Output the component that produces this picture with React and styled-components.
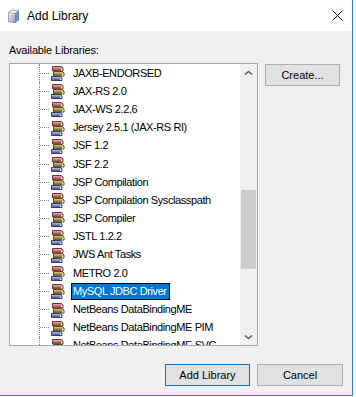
import styled, { createGlobalStyle } from 'styled-components'

const libraries = [
  'JAXB-ENDORSED',
  'JAX-RS 2.0',
  'JAX-WS 2.2.6',
  'Jersey 2.5.1 (JAX-RS RI)',
  'JSF 1.2',
  'JSF 2.2',
  'JSP Compilation',
  'JSP Compilation Sysclasspath',
  'JSP Compiler',
  'JSTL 1.2.2',
  'JWS Ant Tasks',
  'METRO 2.0',
  'MySQL JDBC Driver',
  'NetBeans DataBindingME',
  'NetBeans DataBindingME PIM',
  'NetBeans DataBindingME SVG',
]

const Global = createGlobalStyle`
  body {
    margin: 0;
    background: #ffffff;
    font-family: "Liberation Sans", Arial, sans-serif;
  }
`

const BooksIcon = () => (
  <svg width="16" height="16" viewBox="0 0 16 16">
    {/* top book */}
    <path d="M2.5 1.5h9l1.5 1.5v3h-10.5z" fill="#a85c5c" stroke="#6e3434" />
    <rect x="3" y="2" width="9" height="1.5" fill="#dca0a0" />
    <rect x="11" y="3.5" width="1.5" height="2" fill="#f2e4e4" />
    {/* middle book */}
    <path d="M3.5 6.5h9l1.5 1.5v3h-10.5z" fill="#8a7836" stroke="#5a4c1e" />
    <rect x="4" y="7" width="9" height="1.5" fill="#cdb873" />
    <rect x="12" y="8.5" width="1.5" height="2" fill="#f4efd8" />
    {/* bottom book */}
    <path d="M1.5 11.5h9l1.5 1.5v2.5h-10.5z" fill="#5c689e" stroke="#343c68" />
    <rect x="2" y="12" width="9" height="1.5" fill="#a2acd6" />
    <rect x="10" y="13.5" width="1.5" height="1.5" fill="#e8ecf8" />
  </svg>
)

const WindowIcon = () => (
  <svg width="16" height="16" viewBox="0 0 16 16">
    <defs>
      <linearGradient id="front" x1="0" y1="0" x2="1" y2="1">
        <stop offset="0" stopColor="#e8eef6" />
        <stop offset="1" stopColor="#8fa3c0" />
      </linearGradient>
    </defs>
    <path d="M3 4.5 L7 1.5 L14 2.5 L14 12 L10 15 L3 14 Z" fill="#5d6f8c" />
    <path d="M3.5 4.5 L7.2 2 L13.5 2.8 L10 5.2 Z" fill="#dfe6f0" />
    <path d="M3.5 4.8 L10 5.5 L10 14.5 L3.5 13.7 Z" fill="url(#front)" />
    <path d="M10.3 5.4 L13.6 3 L13.6 11.8 L10.3 14.4 Z" fill="#7d90ae" />
  </svg>
)

const Chevron = ({ down }) => (
  <svg width="9" height="6" viewBox="0 0 9 6">
    <path
      d={down ? 'M1 1.5 L4.5 4.5 L8 1.5' : 'M1 4.5 L4.5 1.5 L8 4.5'}
      fill="none"
      stroke="#606060"
      strokeWidth="1.6"
    />
  </svg>
)

const App = () => {
  return (
    <Window>
      <Global />
      <TitleBar>
        <WindowIcon />
        <Title>Add Library</Title>
        <CloseButton>
          <svg width="11" height="11" viewBox="0 0 11 11">
            <path d="M0.5 0.5 L10.5 10.5 M10.5 0.5 L0.5 10.5" stroke="#111" strokeWidth="1" />
          </svg>
        </CloseButton>
      </TitleBar>
      <Client>
        <Caption>Available Libraries:</Caption>
        <Main>
          <TreePanel>
            <TreeList>
              {libraries.map((name) => (
                <Row key={name}>
                  <Connector />
                  <BooksIcon />
                  <Label selected={name === 'MySQL JDBC Driver'}>{name}</Label>
                </Row>
              ))}
            </TreeList>
            <ScrollBar>
              <ArrowButton>
                <Chevron />
              </ArrowButton>
              <Track>
                <Thumb />
              </Track>
              <ArrowButton>
                <Chevron down />
              </ArrowButton>
            </ScrollBar>
          </TreePanel>
          <Side>
            <Button width={75}>Create...</Button>
          </Side>
        </Main>
        <Footer>
          <Button width={85} primary>Add Library</Button>
          <Button width={86}>Cancel</Button>
        </Footer>
      </Client>
    </Window>
  )
}

const Window = styled.div`
  width: 352px;
  height: 395px;
  border-right: 1px solid #2a7fd4;
  border-bottom: 1px solid #2a7fd4;
  display: flex;
  flex-direction: column;
  background: #f0f0f0;
`

const TitleBar = styled.div`
  height: 31px;
  background: #ffffff;
  display: flex;
  align-items: center;
  padding-left: 5px;
  svg { flex: none; }
`

const Title = styled.span`
  margin-left: 6px;
  font-size: 12px;
  color: #000;
  flex: 1;
`

const CloseButton = styled.div`
  width: 30px;
  height: 31px;
  display: flex;
  align-items: center;
  justify-content: center;
`

const Client = styled.div`
  flex: 1;
  display: flex;
  flex-direction: column;
  padding: 0 9px 9px 9px;
  font-family: "Liberation Sans", Tahoma, sans-serif;
  font-size: 11px;
  color: #000;
`

const Caption = styled.div`
  padding-top: 12px;
  line-height: 14px;
  margin-bottom: 6px;
  letter-spacing: -0.15px;
`

const Main = styled.div`
  display: flex;
  align-items: flex-start;
`

const TreePanel = styled.div`
  width: 247px;
  height: 281px;
  border: 1px solid #a8a8a8;
  background: #ffffff;
  display: flex;
`

const TreeList = styled.div`
  flex: 1;
  overflow: hidden;
  padding-left: 29px;
`

const Row = styled.div`
  height: 18.2px;
  display: flex;
  align-items: center;
  white-space: nowrap;
  svg { flex: none; }
`

const Connector = styled.div`
  width: 10px;
  height: 100%;
  flex: none;
  border-left: 1px dotted #8a8a8a;
  box-sizing: border-box;
  background: repeating-linear-gradient(to right, #8a8a8a 0 1px, transparent 1px 2px)
    left center / 100% 1px no-repeat;
  margin-right: 1px;
`

const Label = styled.span`
  margin-left: 5px;
  padding: 1px 2px 1px 1px;
  line-height: 13px;
  letter-spacing: -0.4px;
  border: 1px solid ${(p) => (p.selected ? '#000' : 'transparent')};
  background: ${(p) => (p.selected ? '#0078d7' : 'transparent')};
  color: ${(p) => (p.selected ? '#ffffff' : '#000')};
`

const ScrollBar = styled.div`
  width: 17px;
  background: #f0f0f0;
  display: flex;
  flex-direction: column;
`

const ArrowButton = styled.div`
  height: 17px;
  display: flex;
  align-items: center;
  justify-content: center;
`

const Track = styled.div`
  flex: 1;
  display: flex;
  flex-direction: column;
  align-items: center;
`

const Thumb = styled.div`
  width: 15px;
  height: 79px;
  margin-top: 109px;
  background: #cdcdcd;
`

const Side = styled.div`
  margin-left: 7px;
  padding-top: 1px;
`

const Button = styled.button`
  width: ${(p) => p.width}px;
  height: 22px;
  padding: 0;
  box-sizing: border-box;
  background: #e1e1e1;
  border: 1px solid ${(p) => (p.primary ? '#0078d7' : '#adadad')};
  font-family: "Liberation Sans", Tahoma, sans-serif;
  font-size: 11px;
  color: #000;
`

const Footer = styled.div`
  margin-top: auto;
  display: flex;
  justify-content: flex-end;
  gap: 7px;
`

export default App
